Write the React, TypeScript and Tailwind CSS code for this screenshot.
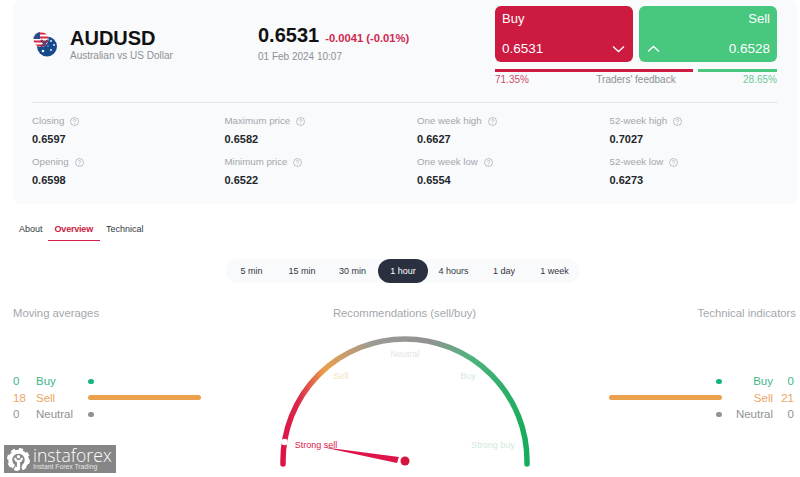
import React from 'react';

const stats = [
  { label: 'Closing', value: '0.6597' },
  { label: 'Maximum price', value: '0.6582' },
  { label: 'One week high', value: '0.6627' },
  { label: '52-week high', value: '0.7027' },
  { label: 'Opening', value: '0.6598' },
  { label: 'Minimum price', value: '0.6522' },
  { label: 'One week low', value: '0.6554' },
  { label: '52-week low', value: '0.6273' },
];

const periods = ['5 min', '15 min', '30 min', '1 hour', '4 hours', '1 day', '1 week'];

const HelpIcon = () => (
  <svg width="9" height="9" viewBox="0 0 9 9" fill="none" className="shrink-0">
    <circle cx="4.5" cy="4.5" r="4" stroke="#a3a7ac" strokeWidth="0.7" />
    <path d="M3.3 3.6c0-.7.5-1.1 1.2-1.1s1.2.4 1.2 1c0 .9-1.2.9-1.2 1.8" stroke="#a3a7ac" strokeWidth="0.7" />
    <circle cx="4.5" cy="6.5" r="0.45" fill="#a3a7ac" />
  </svg>
);

const Flag = () => (
  <svg width="27" height="28" viewBox="0 0 27 28" className="shrink-0">
    <defs>
      <clipPath id="us">
        <circle cx="9" cy="9.5" r="7.5" />
      </clipPath>
    </defs>
    <circle cx="15" cy="16.5" r="10" fill="#174a8c" />
    <g fill="#fff">
      <circle cx="19" cy="11" r="0.9" />
      <circle cx="22" cy="15" r="0.9" />
      <circle cx="19" cy="20" r="0.9" />
      <circle cx="11" cy="21" r="1.3" />
      <circle cx="16" cy="16" r="0.6" />
    </g>
    <g clipPath="url(#us)">
      <rect x="0" y="0" width="20" height="20" fill="#fff" />
      <path d="M0 2.5h20v2H0zM0 6.5h20v2H0zM0 10.5h20v2H0zM0 14.5h20v2H0z" fill="#d8243f" />
      <rect x="0" y="0" width="8" height="9" fill="#2b4a8f" />
      <path d="M9 10l7 7M16 10l-7 7" stroke="#174a8c" strokeWidth="2" />
      <path d="M9 10l7 7M16 10l-7 7" stroke="#d8243f" strokeWidth="1" />
    </g>
  </svg>
);

const Logo = () => (
  <svg width="23" height="23" viewBox="0 0 25 25" className="shrink-0">
    <circle cx="12.5" cy="12.5" r="10.5" fill="none" stroke="#fff" strokeWidth="4" strokeDasharray="4.4 3.85" />
    <path d="M7.5 20.5A9 9 0 1 1 17.5 20.5" fill="none" stroke="#fff" strokeWidth="4.4" />
    <path d="M12.5 24v-10" stroke="#fff" strokeWidth="3.4" />
    <path d="M12.5 14.5c-3 0-3.7-1.8-3.7-3.8M12.5 14.5c3 0 3.7-1.8 3.7-3.8" stroke="#fff" strokeWidth="2.2" fill="none" />
    <circle cx="12.5" cy="9.5" r="1.8" fill="#fff" />
  </svg>
);

const Gauge = () => (
  <svg width="270" height="140" viewBox="270 330 270 140" className="block">
    <defs>
      <linearGradient id="arc" gradientUnits="userSpaceOnUse" x1="282" y1="0" x2="528" y2="0">
        <stop offset="0" stopColor="#dc1346" />
        <stop offset="0.07" stopColor="#db2a4b" />
        <stop offset="0.17" stopColor="#ea9f4c" />
        <stop offset="0.37" stopColor="#9c9a94" />
        <stop offset="0.6" stopColor="#929292" />
        <stop offset="0.76" stopColor="#53b27e" />
        <stop offset="1" stopColor="#16ac5c" />
      </linearGradient>
    </defs>
    <path d="M283 464v-3a122 122 0 0 1 244 0v3" fill="none" stroke="url(#arc)" strokeWidth="5.5" strokeLinecap="round" />
    <circle cx="284.5" cy="442" r="3.2" fill="#fff" />
    <g fontFamily="'Liberation Sans', Arial, sans-serif" fontSize="9" textAnchor="middle">
      <text x="405" y="356.5" fill="#e3e4e6">Neutral</text>
      <text x="341" y="378.5" fill="#f6dfc0">Sell</text>
      <text x="468" y="378.5" fill="#cfeadb">Buy</text>
      <text x="316" y="447.5" fill="#dc1a50">Strong sell</text>
      <text x="493" y="448" fill="#cfeadb">Strong buy</text>
    </g>
    <path d="M322 447l77 10-2 6z" fill="#dd1349" />
    <circle cx="405" cy="461" r="7" fill="#fff" />
    <circle cx="405" cy="461" r="4.5" fill="#d5143f" />
  </svg>
);

const Tally = ({ side }: { side: 'left' | 'right' }) => {
  const right = side === 'right';
  const rows = [
    { n: '0', label: 'Buy', text: 'text-[#3fb58a]', bar: 'w-[6px] bg-[#16b67c]' },
    { n: right ? '21' : '18', label: 'Sell', text: 'text-[#eba564]', bar: 'w-[113px] bg-[#eba04e]' },
    { n: '0', label: 'Neutral', text: 'text-[#8f9296]', bar: 'w-[6px] bg-[#8f9296]' },
  ];
  return (
    <div className="flex flex-col text-[11.5px] leading-[16.5px]">
      {rows.map((r) => (
        <div key={r.label} className={`flex items-center ${right ? 'flex-row-reverse' : ''} ${r.text}`}>
          <span className={`w-[23px] ${right ? 'text-right pr-[2px]' : ''}`}>{r.n}</span>
          <span className={`${right ? 'w-[51px] text-right' : 'w-[52px]'}`}>{r.label}</span>
          <span className={`h-[5px] rounded-full ${r.bar}`} />
        </div>
      ))}
    </div>
  );
};

export default function App() {
  return (
    <div className="relative w-[800px] h-[477px] overflow-hidden bg-white font-['Liberation_Sans',Arial,sans-serif]">
      <section className="ml-[13px] w-[784px] h-[204px] bg-[#f8fafc] rounded-lg px-[19px]">
        <header className="flex h-[103px] border-b border-[#e6e9ec] relative">
          <div className="flex items-start pt-[30px] w-[226px]">
            <Flag />
            <div className="ml-[11px]">
              <div className="text-[20px] font-bold leading-[18px] mt-[-1px] text-[#111]">AUDUSD</div>
              <div className="text-[10px] leading-[12px] mt-[3px] text-[#8d9195]">Australian vs US Dollar</div>
            </div>
          </div>
          <div className="pt-[24px] w-[237px]">
            <div className="flex items-baseline">
              <span className="text-[20px] font-bold leading-[22px] text-[#111]">0.6531</span>
              <span className="ml-[6px] text-[11.2px] font-bold text-[#d0274f]">-0.0041 (-0.01%)</span>
            </div>
            <div className="text-[10px] leading-[12px] mt-[4px] text-[#8d9195]">01 Feb 2024 10:07</div>
          </div>
          <div className="w-[282px] pt-[6px]">
            <div className="flex gap-[6px] text-white">
              <button className="w-[138px] h-[56px] rounded-md bg-[#cc1a41] pl-[7px] pr-[7px] pt-[5px] flex flex-col gap-[14px] text-left">
                <span className="text-[13px] leading-[16px]">Buy</span>
                <span className="flex items-center justify-between text-[13.5px] leading-[16px]">
                  0.6531
                  <svg width="13" height="8" viewBox="0 0 13 8" fill="none" className="mr-px">
                    <path d="M1 1.5l5.5 5 5.5-5" stroke="#fff" strokeWidth="1.3" />
                  </svg>
                </span>
              </button>
              <button className="w-[138px] h-[56px] rounded-md bg-[#48c77f] pl-[7px] pr-[7px] pt-[5px] flex flex-col gap-[14px] text-right">
                <span className="text-[13px] leading-[16px]">Sell</span>
                <span className="flex items-center justify-between text-[13.5px] leading-[16px]">
                  <svg width="13" height="8" viewBox="0 0 13 8" fill="none" className="ml-px">
                    <path d="M1 6.5l5.5-5 5.5 5" stroke="#fff" strokeWidth="1.3" />
                  </svg>
                  0.6528
                </span>
              </button>
            </div>
            <div className="flex gap-[5px] mt-[7px]">
              <div className="w-[198px] h-[2.5px] bg-[#cc1a41]" />
              <div className="w-[79px] h-[2.5px] bg-[#48c77f]" />
            </div>
            <div className="flex justify-between text-[10px] leading-[12px] mt-[2px]">
              <span className="text-[#cf4a6a]">71.35%</span>
              <span className="text-[#8d9195]">Traders' feedback</span>
              <span className="text-[#70c89a]">28.65%</span>
            </div>
          </div>
        </header>
        <div className="grid grid-cols-4 w-[770px] pt-[11px] gap-y-[9px]">
          {stats.map((s) => (
            <div key={s.label}>
              <div className="flex items-center gap-[6px] text-[9.7px] leading-[14px] text-[#a3a7ac]">
                {s.label}
                <HelpIcon />
              </div>
              <div className="text-[11px] font-bold leading-[14px] mt-[4px] text-[#23262b]">{s.value}</div>
            </div>
          ))}
        </div>
      </section>

      <nav className="flex items-start h-[37px] mt-[18px] ml-[19px] text-[9px] text-[#33373c]">
        <span className="leading-[14px]">About</span>
        <span className="ml-[5px] px-[7px] h-[19px] leading-[14px] border-b-[1.5px] border-[#d81e50] text-[#cc1a41] font-bold tracking-[-0.2px]">Overview</span>
        <span className="ml-[6px] leading-[14px]">Technical</span>
      </nav>

      <div className="flex justify-center">
        <div className="flex items-center h-[24px] rounded-full bg-[#f8fafc] ml-[6px] text-[9px] text-[#33373c]">
          {periods.map((p) => (
            <span
              key={p}
              className={`w-[50.5px] h-[24px] leading-[24px] text-center rounded-full ${p === '1 hour' ? 'bg-[#2b3040] text-white' : ''}`}
            >
              {p}
            </span>
          ))}
        </div>
      </div>

      <div className="grid grid-cols-[250px_1fr_250px] mt-[23px] pl-[13px] pr-[4px] text-[11.3px] leading-[14px] text-[#a3a7ac]">
        <div className="flex flex-col items-start">
          <span>Moving averages</span>
          <div className="mt-[53px]">
            <Tally side="left" />
          </div>
        </div>
        <div className="flex flex-col items-center">
          <span>Recommendations (sell/buy)</span>
          <div className="mt-[10px]">
            <Gauge />
          </div>
        </div>
        <div className="flex flex-col items-end">
          <span>Technical indicators</span>
          <div className="mt-[53px]">
            <Tally side="right" />
          </div>
        </div>
      </div>

      <div className="absolute left-[4px] top-[445px] w-[112px] h-[28px] bg-[#868686] flex items-center pl-[3px] text-white">
        <Logo />
        <div className="ml-[3px] flex flex-col">
          <span className="text-[17.6px] leading-[15px] font-light font-['Open_Sans',sans-serif]">instaforex</span>
          <span className="text-[6.8px] leading-[8px] opacity-80">Instant Forex Trading</span>
        </div>
      </div>
    </div>
  );
}
